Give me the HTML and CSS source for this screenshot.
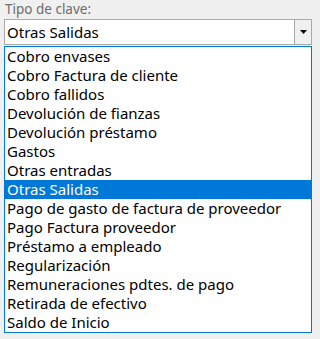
FILE: index.html
```html
<!DOCTYPE html>
<html lang="es">
<head>
<meta charset="utf-8">
<title>Tipo de clave</title>
<link rel="stylesheet" href="styles.css">
</head>
<body>
<div class="field">
  <div class="label">Tipo de clave:</div>
  <div class="combo">
    <span class="value">Otras Salidas</span>
    <span class="btn"><svg width="7" height="4" viewBox="0 0 7 4"><path d="M0 0H7L3.5 4Z" fill="#000"/></svg></span>
  </div>
  <ul class="list">
    <li>Cobro envases</li>
    <li>Cobro Factura de cliente</li>
    <li>Cobro fallidos</li>
    <li>Devolución de fianzas</li>
    <li>Devolución préstamo</li>
    <li>Gastos</li>
    <li>Otras entradas</li>
    <li class="sel">Otras Salidas</li>
    <li>Pago de gasto de factura de proveedor</li>
    <li>Pago Factura proveedor</li>
    <li>Préstamo a empleado</li>
    <li>Regularización</li>
    <li>Remuneraciones pdtes. de pago</li>
    <li>Retirada de efectivo</li>
    <li>Saldo de Inicio</li>
  </ul>
</div>
</body>
</html>
```
FILE: styles.css
```css
html, body {
  margin: 0;
  padding: 0;
  background: #f0f0f0;
}
body {
  font-family: "Noto Sans", "Open Sans", sans-serif;
}
.field {
  padding: 2px 0 0 4px;
  width: 308px;
}
.label {
  font-size: 13.5px;
  color: #6d6d6d;
  height: 17px;
  line-height: 15px;
  padding-left: 1px;
}
.combo {
  box-sizing: border-box;
  height: 26px;
  border: 1px solid #a9a9a9;
  background: #fff;
  display: flex;
  align-items: stretch;
}
.value {
  flex: 1;
  font-size: 15px;
  line-height: 24px;
  padding-left: 2px;
  color: #000;
}
.btn {
  width: 16px;
  border-left: 1px solid #a9a9a9;
  background: #f0f0f0;
  display: flex;
  align-items: center;
  justify-content: center;
}
.list {
  box-sizing: border-box;
  list-style: none;
  margin: 1px 0 0 0;
  padding: 0;
  border: 1px solid #0078d7;
  background: #fff;
  height: 287px;
}
.list li {
  height: 19px;
  line-height: 19px;
  font-size: 15px;
  padding-left: 2px;
  color: #000;
  white-space: nowrap;
}
.list li.sel {
  background: #0078d7;
  color: #fff;
}
```
